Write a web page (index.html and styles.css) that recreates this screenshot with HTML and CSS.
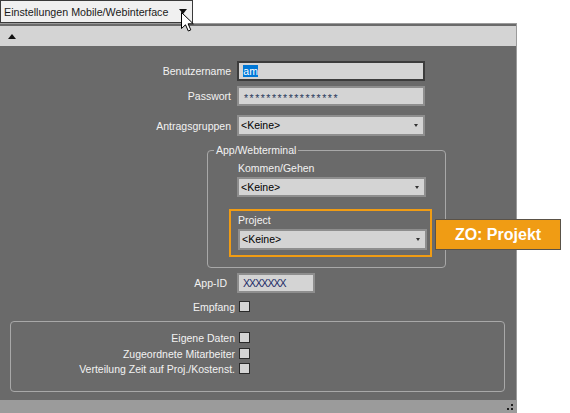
FILE: index.html
```html
<!DOCTYPE html>
<html lang="de">
<head>
<meta charset="utf-8">
<title>Einstellungen Mobile/Webinterface</title>
<link rel="stylesheet" href="styles.css">
</head>
<body>
<div class="page">
  <div class="tab">
    <span class="tab-title">Einstellungen Mobile/Webinterface</span>
    <span class="tab-caret"></span>
  </div>
  <div class="window">
    <div class="topbar"><span class="up"></span></div>
    <div class="content">
      <div class="row r1">
        <span class="lbl">Benutzername</span>
        <div class="field focus"><span class="selected">am</span></div>
      </div>
      <div class="row r2">
        <span class="lbl">Passwort</span>
        <div class="field"><span class="pw">*****************</span></div>
      </div>
      <div class="row r3">
        <span class="lbl">Antragsgruppen</span>
        <div class="field select"><span class="val">&lt;Keine&gt;</span><span class="dd"></span></div>
      </div>
      <fieldset class="group">
        <legend>App/Webterminal</legend>
        <div class="sub-lbl">Kommen/Gehen</div>
        <div class="field select sub-field"><span class="val">&lt;Keine&gt;</span><span class="dd"></span></div>
        <div class="highlight">
          <div class="hl-lbl">Project</div>
          <div class="field select hl-field"><span class="val">&lt;Keine&gt;</span><span class="dd"></span></div>
        </div>
      </fieldset>
      <div class="row r-app">
        <span class="lbl lbl-app">App-ID</span>
        <div class="field app"><span class="xid">XXXXXXX</span></div>
      </div>
      <div class="row cb-row r-emp">
        <span class="cb-lbl">Empfang</span>
        <span class="cb"></span>
      </div>
      <div class="group2">
        <div class="row cb-row g2-1">
          <span class="cb-lbl">Eigene Daten</span>
          <span class="cb"></span>
        </div>
        <div class="row cb-row g2-2">
          <span class="cb-lbl">Zugeordnete Mitarbeiter</span>
          <span class="cb"></span>
        </div>
        <div class="row cb-row g2-3">
          <span class="cb-lbl">Verteilung Zeit auf Proj./Kostenst.</span>
          <span class="cb"></span>
        </div>
      </div>
    </div>
    <div class="status">
      <svg class="grip" width="6" height="6" viewBox="0 0 6 6"><rect x="4" y="0" width="2" height="2" fill="#1e1e1e"/><rect x="0" y="4" width="2" height="2" fill="#1e1e1e"/><rect x="4" y="4" width="2" height="2" fill="#1e1e1e"/></svg>
    </div>
  </div>
  <div class="callout">ZO: Projekt</div>
  <svg class="cursor" width="14" height="20" viewBox="0 0 14 20"><polygon points="0.5,0.5 0.5,16.5 4.5,12.8 7.3,19 9.8,17.9 7.1,11.8 12.3,11.8" fill="#fff" stroke="#000" stroke-width="1" stroke-linejoin="miter"/></svg>
</div>
</body>
</html>
```
FILE: styles.css
```css
* { box-sizing: border-box; }
html, body { margin: 0; padding: 0; }
body {
  width: 570px;
  height: 413px;
  overflow: hidden;
  background: #ffffff;
  font-family: "Liberation Sans", Arial, sans-serif;
  font-size: 10.5px;
}
.page { position: relative; width: 570px; height: 413px; }

/* tab */
.tab {
  display: flex;
  align-items: center;
  width: 193px;
  height: 23px;
  border: 1px solid #3a3a3a;
  background: #f0f0f0;
  padding-left: 3px;
  color: #1a1a1a;
  font-size: 10.7px;
}
.tab-title { flex: 1; line-height: 14px; white-space: nowrap; }
.tab-caret {
  width: 0; height: 0;
  border-left: 4.5px solid transparent;
  border-right: 4.5px solid transparent;
  border-top: 5px solid #111;
  margin-right: 5px;
  margin-top: -1px;
}

/* window */
.window {
  width: 517px;
  height: 390px;
  border-top: 1px solid #9b9b9b;
  border-right: 1px solid #9b9b9b;
  background: #6a6a6a;
  display: flex;
  flex-direction: column;
}
.topbar {
  margin-top: 2px;
  height: 20px;
  background: #d4d4d4;
  display: flex;
  align-items: center;
  padding-left: 8px;
}
.up {
  width: 0; height: 0;
  border-left: 4.5px solid transparent;
  border-right: 4.5px solid transparent;
  border-bottom: 5px solid #111;
}
.content {
  height: 354px;
  display: flex;
  flex-direction: column;
  align-items: flex-start;
}
.status {
  height: 13px;
  background: #9b9b9b;
  display: flex;
  justify-content: flex-end;
  align-items: center;
  padding-right: 3px;
}
.grip { display: block; }

/* rows */
.row { display: flex; align-items: center; }
.lbl {
  width: 231px;
  margin-right: 6px;
  text-align: right;
  color: #f2f2f2;
  line-height: 14px;
  white-space: nowrap;
}
.lbl-app { width: 227px; margin-right: 10px; }
.field {
  height: 20px;
  width: 188px;
  background: #d4d4d4;
  border: 2px solid #8e8e8e;
  display: flex;
  align-items: center;
  color: #000;
  line-height: 13px;
  white-space: nowrap;
}
.field.focus { border-color: #3c3c3c; }
.r1 { margin-top: 15px; }
.r2 { margin-top: 5px; }
.r3 { margin-top: 9px; }
.r3 .field { height: 21px; }

.selected {
  margin-left: 4px;
  background: #0078d7;
  color: #fff;
  line-height: 12px;
  padding: 0 0.3px;
}
.pw {
  margin-left: 5px;
  margin-top: 5px;
  letter-spacing: 1.5px;
  color: #2b3a5c;
}
.select { justify-content: space-between; padding: 0 5px 0 2px; }
.dd {
  width: 0; height: 0;
  border-left: 2.5px solid transparent;
  border-right: 2.5px solid transparent;
  border-top: 3px solid #333;
}

/* App/Webterminal group */
.group {
  margin: 7px 0 0 207px;
  width: 239px;
  min-width: 0;
  padding: 0 0 10px 6px;
  border: 1px solid #a8a8a8;
  border-radius: 4px;
}
.group legend {
  padding: 0 2px;
  color: #f2f2f2;
  line-height: 14px;
}
.sub-lbl {
  margin: 4px 0 0 23px;
  padding-left: 1px;
  color: #f2f2f2;
  line-height: 14px;
}
.sub-field { margin: 2px 0 0 23px; width: 189px; }
.highlight {
  margin: 12px 0 0 15px;
  width: 203px;
  border: 2px solid #f09c14;
  padding: 2px 0 5px 7px;
}
.hl-lbl { color: #f2f2f2; line-height: 14px; }
.hl-field { margin-top: 2px; width: 189px; height: 21px; }

/* App-ID / Empfang */
.r-app { margin-top: 5px; }
.app { width: 78px; }
.xid { margin-left: 4px; letter-spacing: -0.9px; color: #1c2a66; }

.cb-row { height: 11px; }
.cb-lbl {
  width: 235px;
  margin-right: 4px;
  text-align: right;
  color: #f2f2f2;
  line-height: 14px;
  white-space: nowrap;
}
.cb {
  width: 11px;
  height: 11px;
  background: #d4d4d4;
  border: 1px solid #2a2a2a;
}
.r-emp { margin-top: 8px; }

.group2 {
  margin: 9px 0 0 10px;
  width: 495px;
  height: 71px;
  border: 1px solid #a8a8a8;
  border-radius: 4px;
  padding-top: 10px;
}
.group2 .cb-lbl { width: 224px; }
.g2-2 { margin-top: 5px; }
.g2-3 { margin-top: 4px; }

/* overlays */
.callout {
  position: absolute;
  left: 435px;
  top: 219px;
  width: 126px;
  height: 31px;
  background: #f09c14;
  border: 1px solid #5a5248;
  color: #fff;
  font-weight: bold;
  font-size: 16px;
  display: flex;
  align-items: center;
  justify-content: center;
}
.cursor { position: absolute; left: 181px; top: 12px; }
```
